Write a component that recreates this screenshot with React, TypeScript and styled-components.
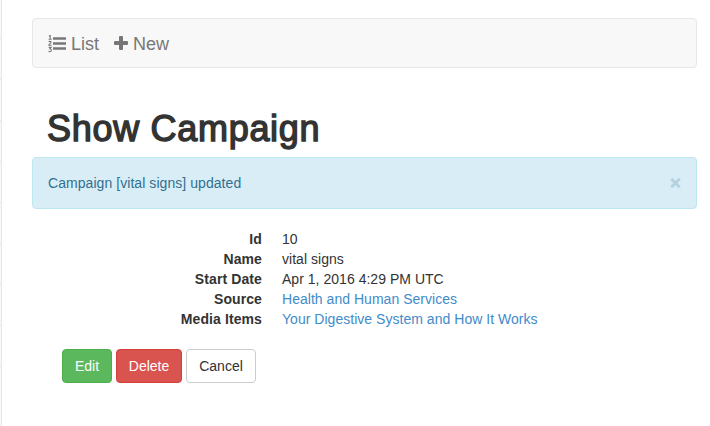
import React from "react";
import styled, { createGlobalStyle } from "styled-components";

const GlobalStyle = createGlobalStyle`
  *, *::before, *::after { box-sizing: border-box; }
  body {
    margin: 0;
    background: #fff;
    color: #333;
    font: 14px/20px "Liberation Sans", Arial, sans-serif;
    overflow: hidden;
  }
`;

const Layout = styled.div`
  display: flex;
  height: 426px;
`;

const SidebarEdge = styled.aside`
  flex: none;
  width: 2px;
  background: #f8f8f8;
  border-right: 1px solid #e7e7e7;
`;

const SidebarItem = styled.div<{ $height: number }>`
  height: ${({ $height }) => $height}px;
  border-bottom: 1px solid #e7e7e7;
`;

const Main = styled.main`
  flex: 1;
  padding: 18px 13px 0 30px;
`;

const Toolbar = styled.nav`
  display: flex;
  gap: 14px;
  align-items: center;
  height: 50px;
  padding: 2px 15px 0;
  background: #f8f8f8;
  border: 1px solid #e7e7e7;
  border-radius: 4px;
`;

const ToolbarLink = styled.a<{ $width: number }>`
  display: flex;
  align-items: center;
  gap: 5px;
  color: #777;
  font-size: 18px;

  svg { flex: none; }
  span {
    width: ${({ $width }) => $width}px;
    white-space: nowrap;
  }
`;

const Title = styled.h1`
  margin: 41px 0 8px 15px;
  font-size: 36px;
  line-height: 40px;
  font-weight: 400;
  letter-spacing: 0.7px;
  -webkit-text-stroke: 1.4px #333;
`;

const Alert = styled.div`
  display: flex;
  justify-content: space-between;
  align-items: center;
  height: 52px;
  padding: 0 15px;
  color: #31708f;
  background: #d9edf7;
  border: 1px solid #bce8f1;
  border-radius: 4px;
`;

const Message = styled.span`
  letter-spacing: 0.06px;
`;

const CloseButton = styled.button`
  display: flex;
  padding: 0;
  border: 0;
  background: none;
`;

const Details = styled.dl`
  display: grid;
  grid-template-columns: 230px 1fr;
  column-gap: 20px;
  margin: 20px 0 20px;
`;

const Term = styled.dt`
  font-weight: 700;
  text-align: right;
  letter-spacing: 0.1px;
`;

const Value = styled.dd`
  margin: 0;
  letter-spacing: 0.03px;
`;

const Link = styled.a`
  color: #428bca;
`;

const Actions = styled.div`
  display: flex;
  gap: 4px;
  padding-left: 30px;
`;

const Button = styled.button<{ $bg: string; $border: string; $color: string; $width: number }>`
  width: ${({ $width }) => $width}px;
  height: 34px;
  padding: 0;
  font: inherit;
  color: ${({ $color }) => $color};
  background: ${({ $bg }) => $bg};
  border: 1px solid ${({ $border }) => $border};
  border-radius: 4px;
`;

const ListIcon = () => (
  <svg width="18" height="18" viewBox="0 0 18 18" fill="none" stroke="#777">
    <path d="M5 3.5H18M5 8.500H18M5 13.500H18" strokeWidth="2.4" />
    <path
      d="M.9 1.300L2.200.5V4.300M.6 4.200H3.700M.7 7.100C1.200 6 3.100 6.300 3.100 7.300C3.100 8.400.8 8.900.8 10.200H3.600M.7 12.400H3.100L1.900 13.800C3.800 13.700 3.800 16.800 1.900 16.800C1.300 16.800.9 16.600.5 16.200"
      strokeWidth="1.1"
    />
  </svg>
);

const PlusIcon = () => (
  <svg width="14" height="18" viewBox="0 0 14 18" fill="#777">
    <path d="M6 1h2a1 1 0 0 1 1 1v4h4a1 1 0 0 1 1 1v2a1 1 0 0 1-1 1H9v4a1 1 0 0 1-1 1H6a1 1 0 0 1-1-1v-4H1a1 1 0 0 1-1-1V7a1 1 0 0 1 1-1h4V2a1 1 0 0 1 1-1z" />
  </svg>
);

const CloseIcon = () => (
  <svg width="11" height="12" viewBox="0 0 11 12" stroke="#b7d2df" strokeWidth="3">
    <path d="M1.300 1.800L9.700 10.200M9.700 1.800L1.300 10.200" />
  </svg>
);

const sidebarItemHeights = [39, 41, 41, 41, 41, 41, 41, 41, 41];

export default function App() {
  return (
    <>
      <GlobalStyle />
      <Layout>
        <SidebarEdge>
          {sidebarItemHeights.map((height, index) => (
            <SidebarItem key={index} $height={height} />
          ))}
        </SidebarEdge>
        <Main>
          <Toolbar>
            <ToolbarLink $width={29}><ListIcon /><span>List</span></ToolbarLink>
            <ToolbarLink $width={37}><PlusIcon /><span>New</span></ToolbarLink>
          </Toolbar>
          <Title>Show Campaign</Title>
          <Alert>
            <Message>Campaign [vital signs] updated</Message>
            <CloseButton aria-label="Close"><CloseIcon /></CloseButton>
          </Alert>
          <Details>
            <Term>Id</Term>
            <Value>10</Value>
            <Term>Name</Term>
            <Value>vital signs</Value>
            <Term>Start Date</Term>
            <Value>Apr 1, 2016 4:29 PM UTC</Value>
            <Term>Source</Term>
            <Value><Link>Health and Human Services</Link></Value>
            <Term>Media Items</Term>
            <Value><Link>Your Digestive System and How It Works</Link></Value>
          </Details>
          <Actions>
            <Button $bg="#5cb85c" $border="#4cae4c" $color="#fff" $width={50}>Edit</Button>
            <Button $bg="#d9534f" $border="#d43f3a" $color="#fff" $width={66}>Delete</Button>
            <Button $bg="#fff" $border="#ccc" $color="#333" $width={70}>Cancel</Button>
          </Actions>
        </Main>
      </Layout>
    </>
  );
}
